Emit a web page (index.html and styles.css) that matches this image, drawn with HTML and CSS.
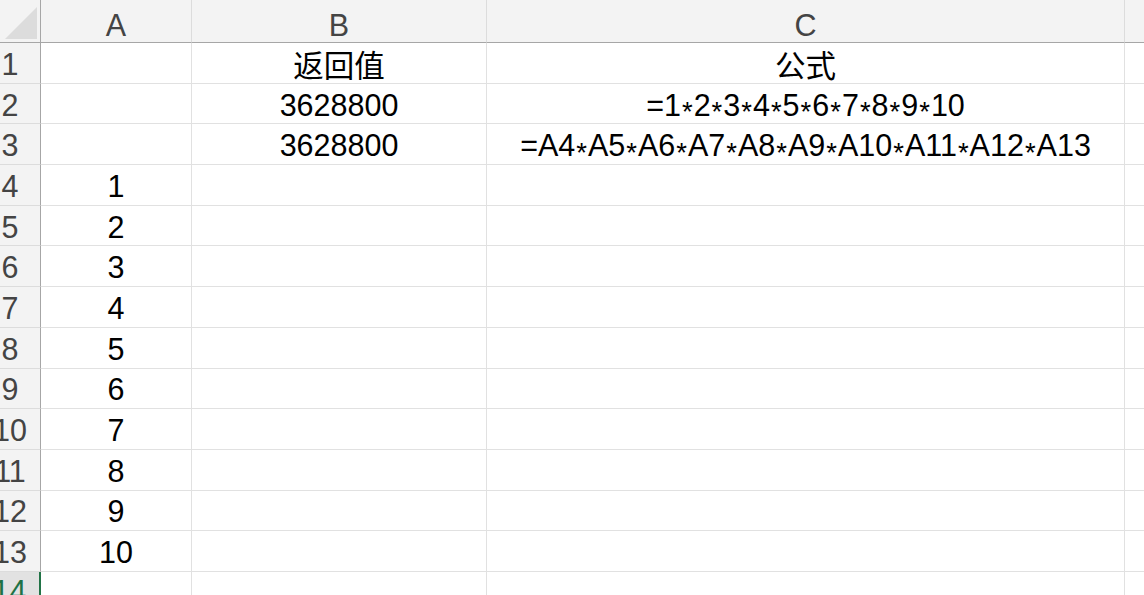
FILE: index.html
```html
<!DOCTYPE html>
<html lang="zh">
<head>
<meta charset="utf-8">
<title>Sheet</title>
<link rel="stylesheet" href="styles.css">
</head>
<body>
<div class="sheet">
  <div class="corner"><div class="tri"></div></div>
  <div class="colhead">A</div>
  <div class="colhead">B</div>
  <div class="colhead">C</div>
  <div class="colhead last"></div>

  <div class="rowhead"><span>1</span></div>
  <div class="cell"></div>
  <div class="cell">返回值</div>
  <div class="cell">公式</div>
  <div class="cell last"></div>

  <div class="rowhead"><span>2</span></div>
  <div class="cell"></div>
  <div class="cell">3628800</div>
  <div class="cell">=1<span class="op">*</span>2<span class="op">*</span>3<span class="op">*</span>4<span class="op">*</span>5<span class="op">*</span>6<span class="op">*</span>7<span class="op">*</span>8<span class="op">*</span>9<span class="op">*</span>10</div>
  <div class="cell last"></div>

  <div class="rowhead"><span>3</span></div>
  <div class="cell"></div>
  <div class="cell">3628800</div>
  <div class="cell">=A4<span class="op">*</span>A5<span class="op">*</span>A6<span class="op">*</span>A7<span class="op">*</span>A8<span class="op">*</span>A9<span class="op">*</span>A10<span class="op">*</span>A11<span class="op">*</span>A12<span class="op">*</span>A13</div>
  <div class="cell last"></div>

  <div class="rowhead"><span>4</span></div>
  <div class="cell">1</div><div class="cell"></div><div class="cell"></div><div class="cell last"></div>

  <div class="rowhead"><span>5</span></div>
  <div class="cell">2</div><div class="cell"></div><div class="cell"></div><div class="cell last"></div>

  <div class="rowhead"><span>6</span></div>
  <div class="cell">3</div><div class="cell"></div><div class="cell"></div><div class="cell last"></div>

  <div class="rowhead"><span>7</span></div>
  <div class="cell">4</div><div class="cell"></div><div class="cell"></div><div class="cell last"></div>

  <div class="rowhead"><span>8</span></div>
  <div class="cell">5</div><div class="cell"></div><div class="cell"></div><div class="cell last"></div>

  <div class="rowhead"><span>9</span></div>
  <div class="cell">6</div><div class="cell"></div><div class="cell"></div><div class="cell last"></div>

  <div class="rowhead"><span>10</span></div>
  <div class="cell">7</div><div class="cell"></div><div class="cell"></div><div class="cell last"></div>

  <div class="rowhead"><span>11</span></div>
  <div class="cell">8</div><div class="cell"></div><div class="cell"></div><div class="cell last"></div>

  <div class="rowhead"><span>12</span></div>
  <div class="cell">9</div><div class="cell"></div><div class="cell"></div><div class="cell last"></div>

  <div class="rowhead"><span>13</span></div>
  <div class="cell">10</div><div class="cell"></div><div class="cell"></div><div class="cell last"></div>

  <div class="rowhead active"><span>14</span></div>
  <div class="cell"></div><div class="cell"></div><div class="cell"></div><div class="cell last"></div>
</div>
</body>
</html>
```

FILE: styles.css
```css
html, body {
  margin: 0;
  padding: 0;
  background: #ffffff;
  overflow: hidden;
}

body {
  width: 1144px;
  height: 595px;
  font-family: "Liberation Sans", Arial, "Noto Sans CJK SC", sans-serif;
}

.sheet {
  display: grid;
  grid-template-columns: 41px 151px 295px 638px 1fr;
  grid-template-rows: 43px repeat(13, 40.7px) 1fr;
  width: 1144px;
  height: 595px;
  overflow: hidden;
}

.corner {
  background: #f3f3f3;
  border-right: 1px solid #a6a6a6;
  border-bottom: 1px solid #a6a6a6;
  box-sizing: border-box;
  display: flex;
  align-items: flex-end;
  justify-content: flex-end;
  padding: 0 3px 3px 0;
}

.tri {
  width: 32px;
  height: 32px;
  background: #dcdcdc;
  clip-path: polygon(100% 0, 100% 100%, 0 100%);
}

.colhead {
  background: #f3f3f3;
  border-right: 1px solid #dcdcdc;
  border-bottom: 1px solid #a6a6a6;
  box-sizing: border-box;
  display: flex;
  align-items: center;
  justify-content: center;
  padding-top: 8px;
  font-size: 30.5px;
  color: #444444;
}

.colhead.last {
  border-right: none;
}

.rowhead {
  background: #f3f3f3;
  border-right: 1px solid #a6a6a6;
  border-bottom: 1px solid #dcdcdc;
  box-sizing: border-box;
  display: flex;
  align-items: center;
  justify-content: center;
  padding: 3px 20px 0 0;
  font-size: 30.5px;
  color: #444444;
  overflow: visible;
  white-space: nowrap;
}

.rowhead.active {
  background: #e2e2e2;
  color: #1f7246;
  border-right: 2px solid #217346;
  border-bottom: none;
  align-items: flex-start;
  padding-top: 2px;
}

.cell {
  border-right: 1px solid #e1e1e1;
  border-bottom: 1px solid #e1e1e1;
  box-sizing: border-box;
  display: flex;
  align-items: center;
  justify-content: center;
  padding-top: 3px;
  font-size: 30.5px;
  color: #000000;
  white-space: nowrap;
  overflow: visible;
}

.cell.last {
  border-right: none;
}

.op {
  position: relative;
  top: 0.26em;
  font-size: 0.9em;
  padding: 0 1px;
}
```
